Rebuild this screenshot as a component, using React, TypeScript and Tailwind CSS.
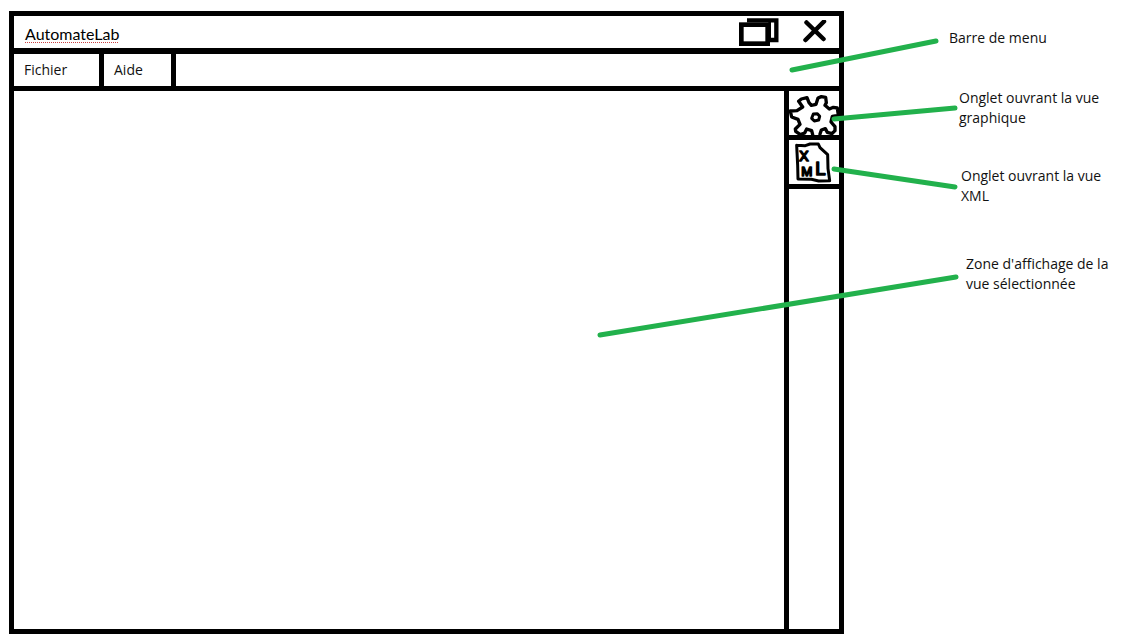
import { useState } from "react";

type View = "graph" | "xml";

function RestoreIcon() {
  return (
    <svg viewBox="14 18 120 84" className="block h-7 w-10" fill="none" stroke="#000" aria-hidden="true">
      <path d="M38 25H126V84H104" strokeWidth="13" />
      <path d="M106 30V90" strokeWidth="8" />
      <rect x="21" y="38" width="79" height="57" strokeWidth="14" />
    </svg>
  );
}

function CloseIcon() {
  return (
    <svg viewBox="0 0 24 24" className="block h-6 w-6" fill="none" stroke="#000" strokeWidth="4.500" strokeLinecap="round" aria-hidden="true">
      <path d="M3.500 2.500 20.500 19M21 1.500 2.500 20" />
    </svg>
  );
}

function GearIcon() {
  return (
    <svg viewBox="9 3 150 132" className="block h-11 w-full" fill="none" stroke="#000" strokeWidth="10" strokeLinecap="round" strokeLinejoin="round" aria-hidden="true">
      <path d="M38 34 46 27 63 23 69 38 76 46 90 43 96 24 106 20 119 22 121 38 117 46 130 57 142 52 154 54 157 76 139 79 135 96 147 110 147 122 138 131 124 127 118 116 106 120 102 132M80 134 77 122 62 117 56 129 43 134 29 124 28 117 42 103 36 88 17 81 13 63 33 62 50 51 38 34" />
      <path d="M82 72 94 71 101 79 98 90 85 93 77 85Z" strokeWidth="9" />
    </svg>
  );
}

function XmlIcon() {
  return (
    <svg viewBox="9 6 150 132" className="block h-11 w-full" fill="none" stroke="#000" strokeWidth="9" strokeLinecap="round" strokeLinejoin="round" aria-hidden="true">
      <path d="M32 22 58 23 72 18 97 18 102 29 125 50 126 92 131 128 98 129 76 124 36 123 35 82 32 22" />
      <g fill="#000" strokeWidth="5" fontFamily="Liberation Sans, sans-serif">
        <text x="40" y="68" fontSize="42">X</text>
        <text x="46" y="114" fontSize="40">M</text>
        <text x="88" y="112" fontSize="56">L</text>
      </g>
    </svg>
  );
}

function Callouts() {
  return (
    <svg viewBox="0 0 540 350" className="pointer-events-none absolute top-0 right-0 h-[350px] w-[540px]" fill="none" stroke="#22b14c" strokeWidth="5" strokeLinecap="round" aria-hidden="true">
      <path d="M202 70 346 41M244 119 365 108M244 169 365 187M10 335 366 277" />
    </svg>
  );
}

export default function App() {
  const [view, setView] = useState<View>("graph");

  return (
    <div className="relative flex min-h-screen bg-white pt-[11px] pr-2 pb-[9px] pl-[9px] font-['Open_Sans','Noto_Sans',sans-serif] text-sm text-[#111]">
      <main className="flex min-w-0 flex-1 flex-col border-5 border-black">
        <header className="flex h-8 items-center border-black pr-3 pl-[11px]">
          <h1 className="flex-1 pt-1 font-['Lato',sans-serif] text-base leading-6 text-black">
            <span className="underline decoration-[#c44] decoration-dotted decoration-1 underline-offset-2">AutomateLab</span>
          </h1>
          <div className="flex items-center gap-6">
            <button type="button" aria-label="Restaurer">
              <RestoreIcon />
            </button>
            <button type="button" aria-label="Fermer">
              <CloseIcon />
            </button>
          </div>
        </header>
        <nav aria-label="Menu" className="flex h-[43px] border-t-6 border-b-5 border-black">
          <button type="button" className="w-[90px] border-r-5 border-black pl-[10px] text-left">Fichier</button>
          <button type="button" className="w-[72px] border-r-5 border-black pl-[10px] text-left">Aide</button>
        </nav>
        <div className="flex flex-1">
          <section aria-label="Vue sélectionnée" className="flex-1" />
          <div role="tablist" aria-orientation="vertical" className="flex w-[55px] flex-col border-l-5 border-black">
            <button type="button" role="tab" aria-label="Vue graphique" aria-selected={view === "graph"} onClick={() => setView("graph")} className="border-b-5 border-black">
              <GearIcon />
            </button>
            <button type="button" role="tab" aria-label="Vue XML" aria-selected={view === "xml"} onClick={() => setView("xml")} className="border-b-5 border-black">
              <XmlIcon />
            </button>
          </div>
        </div>
      </main>
      <aside className="flex w-[278px] shrink-0 flex-col pt-[17px] pl-[105px] leading-5">
        <p>Barre de menu</p>
        <p className="mt-10 pl-[10px]">Onglet ouvrant la vue<br />graphique</p>
        <p className="mt-[38px] pl-3">Onglet ouvrant la vue<br />XML</p>
        <p className="mt-12 pl-[17px]">Zone d'affichage de la<br />vue sélectionnée</p>
      </aside>
      <Callouts />
    </div>
  );
}
